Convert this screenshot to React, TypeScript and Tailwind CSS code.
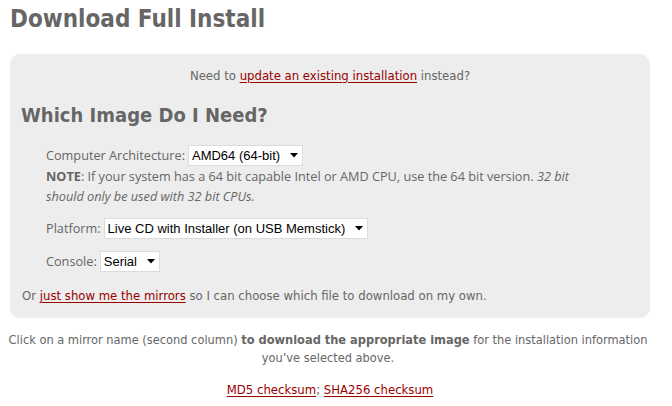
import React from 'react';

const narrow = { fontFamily: '"Liberation Sans Narrow", "DejaVu Sans Condensed", sans-serif' };

const FakeSelect: React.FC<{ value: string }> = ({ value }) => (
  <span
    className="inline-flex h-[21px] items-center gap-[10px] border border-[#dcdcdc] bg-white pl-[3px] pr-[4px] text-[13px] leading-none text-black"
    style={{ fontFamily: '"Liberation Sans", Arial, sans-serif' }}
  >
    <span>{value}</span>
    <svg width="8" height="5" viewBox="0 0 8 5">
      <path d="M0 0h8L4 4.5z" fill="#000" />
    </svg>
  </span>
);

const Link: React.FC<{ children: React.ReactNode }> = ({ children }) => (
  <a href="#" className="text-[#990000] underline decoration-[#990000] underline-offset-[2px]">
    {children}
  </a>
);

export default function App() {
  return (
    <div className="h-[406px] w-[672px] overflow-hidden bg-white text-[#666]" style={narrow}>
      <h1 className="pl-[10px] pt-[4px] text-[24px] font-bold leading-[30px] text-[#666]">Download Full Install</h1>

      <div className="ml-[10px] mt-[20px] w-[640px] rounded-[10px] bg-[#ededed] pb-[12px] pt-[12px]">
        <p className="text-center text-[13px] leading-[20px]">
          Need to <Link>update an existing installation</Link> instead?
        </p>

        <h2 className="mt-[17px] pl-[11px] text-[20px] font-bold leading-[24px] text-[#666]">Which Image Do I Need?</h2>

        <div
          className="mt-[18px] pl-[36px] text-[12.7px] text-[#666]"
          style={{ fontFamily: '"Open Sans", "DejaVu Sans", sans-serif' }}
        >
          <div className="flex items-center gap-[3px]">
            <span>Computer Architecture:</span>
            <FakeSelect value="AMD64 (64-bit)" />
          </div>
          <p className="w-[535px] leading-[20px]">
            <b className="font-bold">NOTE</b>: If your system has a 64 bit capable Intel or AMD CPU, use the 64 bit version.{' '}
            <i>32 bit should only be used with 32 bit CPUs.</i>
          </p>
          <div className="mt-[12px] flex items-center gap-[3px]">
            <span>Platform:</span>
            <FakeSelect value="Live CD with Installer (on USB Memstick)" />
          </div>
          <div className="mt-[12px] flex items-center gap-[3px]">
            <span>Console:</span>
            <FakeSelect value="Serial" />
          </div>
        </div>

        <p className="mt-[14px] pl-[12px] text-[13px] leading-[20px]">
          Or <Link>just show me the mirrors</Link> so I can choose which file to download on my own.
        </p>
      </div>

      <p className="mt-[13px] w-[656px] text-center text-[12.7px] leading-[18px]">
        Click on a mirror name (second column) <b className="font-bold">to download the appropriate image</b> for the installation information you&rsquo;ve selected above.
      </p>

      <p className="ml-[10px] mt-[13px] w-[640px] text-center text-[13px] leading-[20px]">
        <Link>MD5 checksum</Link>; <Link>SHA256 checksum</Link>
      </p>
    </div>
  );
}
